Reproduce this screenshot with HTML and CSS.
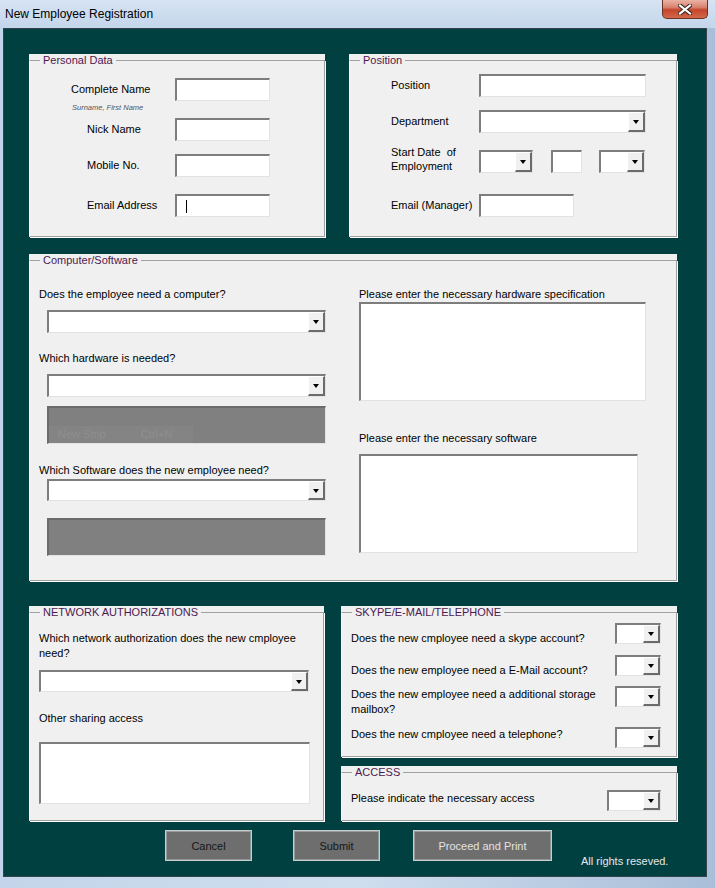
FILE: index.html
```html
<!DOCTYPE html>
<html>
<head>
<meta charset="utf-8">
<title>New Employee Registration</title>
<link rel="stylesheet" href="styles.css">
</head>
<body>
<div class="window">
  <div class="titlebar">
    <span class="title">New Employee Registration</span>
    <span class="close">
      <svg width="14" height="11" viewBox="0 0 14 11"><path d="M2 1.5 L12 9.5 M12 1.5 L2 9.5" stroke="#3a2420" stroke-width="4.2" stroke-linecap="square"/><path d="M2 1.5 L12 9.5 M12 1.5 L2 9.5" stroke="#fff" stroke-width="2.2" stroke-linecap="square"/></svg>
    </span>
  </div>
  <div class="client">
    <div class="row1">
      <div class="panel personal">
        <fieldset class="frame">
          <legend>Personal Data</legend>
          <div class="pd">
            <div class="pd-row"><span class="lbl wide">Complete Name</span><span class="tb w95"></span></div>
            <div class="note">Surname, First Name</div>
            <div class="pd-row"><span class="lbl">Nick Name</span><span class="tb w95"></span></div>
            <div class="pd-row gap13"><span class="lbl">Mobile No.</span><span class="tb w95"></span></div>
            <div class="pd-row gap17"><span class="lbl">Email Address</span><span class="tb w95"><span class="caret"></span></span></div>
          </div>
        </fieldset>
      </div>
      <div class="panel position">
        <fieldset class="frame">
          <legend>Position</legend>
          <div class="pos">
            <div class="pos-row"><span class="lbl">Position</span><span class="tb w167"></span></div>
            <div class="pos-row gap13"><span class="lbl">Department</span><span class="tb combo w167"><span class="dd"></span></span></div>
            <div class="pos-row gap17"><span class="lbl two">Start Date&nbsp; of<br>Employment</span><span class="tb combo w54 mr18"><span class="dd"></span></span><span class="tb w31 mr17"></span><span class="tb combo w46"><span class="dd"></span></span></div>
            <div class="pos-row gap21"><span class="lbl">Email (Manager)</span><span class="tb w95"></span></div>
          </div>
        </fieldset>
      </div>
    </div>

    <div class="panel computer">
      <fieldset class="frame">
        <legend>Computer/Software</legend>
        <div class="cs">
          <div class="cs-left">
            <div class="q mt21">Does the employee need a computer?</div>
            <div class="tb combo cbw mt9"><span class="dd"></span></div>
            <div class="q mt19">Which hardware is needed?</div>
            <div class="tb combo cbw mt9"><span class="dd"></span></div>
            <div class="graybox mt9"><div class="ghost"><span>New Strip</span><span>Ctrl+N</span></div></div>
            <div class="q mt20">Which Software does the new employee need?</div>
            <div class="tb combo cbw h22 mt2"><span class="dd"></span></div>
            <div class="graybox mt17"></div>
          </div>
          <div class="cs-right">
            <div class="q mt21">Please enter the necessary hardware specification</div>
            <div class="tb ta w287 mt1"></div>
            <div class="q mt31">Please enter the necessary software</div>
            <div class="tb ta w279 mt9"></div>
          </div>
        </div>
      </fieldset>
    </div>

    <div class="row3">
      <div class="panel network">
        <fieldset class="frame">
          <legend>NETWORK AUTHORIZATIONS</legend>
          <div class="net">
            <div class="q2 mt12">Which network authorization does the new cmployee<br>need?</div>
            <div class="tb combo w270 h22 mt9"><span class="dd"></span></div>
            <div class="q2 mt19">Other sharing access</div>
            <div class="tb w271 h62 mt16"></div>
          </div>
        </fieldset>
      </div>
      <div class="rightcol">
        <div class="panel skype">
          <fieldset class="frame">
            <legend>SKYPE/E-MAIL/TELEPHONE</legend>
            <div class="sk">
              <div class="sk-row h32"><span class="sq mt8">Does the new cmployee need a skype account?</span><span class="tb combo w46 h21"><span class="dd"></span></span></div>
              <div class="sk-row h31"><span class="sq mt8">Does the new employee need a E-Mail account?</span><span class="tb combo w46 h21"><span class="dd"></span></span></div>
              <div class="sk-row h41"><span class="sq mt1">Does the new employee need a additional storage<br>mailbox?</span><span class="tb combo w46 h21"><span class="dd"></span></span></div>
              <div class="sk-row"><span class="sq">Does the new cmployee need a telephone?</span><span class="tb combo w46 h21"><span class="dd"></span></span></div>
            </div>
          </fieldset>
        </div>
        <div class="panel access">
          <fieldset class="frame">
            <legend>ACCESS</legend>
            <div class="ac">
              <div class="sk-row"><span class="sq acq mt1">Please indicate the necessary access</span><span class="tb combo w54 h21"><span class="dd"></span></span></div>
            </div>
          </fieldset>
        </div>
      </div>
    </div>

    <div class="buttons">
      <span class="btn mr41">Cancel</span>
      <span class="btn mr33">Submit</span>
      <span class="btn wide-btn light mr29">Proceed and Print</span>
      <span class="rights">All rights reseved.</span>
    </div>
  </div>
</div>
</body>
</html>
```
FILE: styles.css
```css
* { box-sizing: border-box; }
html, body { margin: 0; padding: 0; }
body {
  width: 715px;
  height: 888px;
  overflow: hidden;
  font-family: "Liberation Sans", Arial, sans-serif;
  font-size: 11px;
  color: #000;
  background: #b9cce2;
}
.window {
  width: 715px;
  height: 888px;
  display: flex;
  flex-direction: column;
  background: linear-gradient(90deg, #c3d5ea 0%, #cfdeef 50%, #a9bed8 100%);
}
.titlebar {
  height: 28px;
  display: flex;
  align-items: flex-start;
  background: linear-gradient(#d6e4f3, #c4d6eb);
}
.title {
  font-size: 12px;
  line-height: 14px;
  margin: 7px 0 0 5px;
  color: #000;
}
.close {
  margin-left: auto;
  margin-right: 7px;
  width: 46px;
  height: 19px;
  border: 1px solid #6b3328;
  border-top: 0;
  border-radius: 0 0 5px 5px;
  background: linear-gradient(#eab3a5 0%, #d98471 40%, #c4452c 55%, #d2684a 100%);
  display: flex;
  align-items: center;
  justify-content: center;
}
.client {
  flex: 1;
  margin: 0 8px 11px 3px;
  border: 1px solid #34424c;
  background: #004040;
  padding: 25px 0 0 25px;
}

/* panels */
.row1 { display: flex; gap: 24px; }
.row3 { display: flex; gap: 17px; margin-top: 25px; }
.rightcol { display: flex; flex-direction: column; gap: 9px; }
.panel { background: #f0f0f0; }
.personal { width: 296px; height: 183px; }
.position { width: 328px; height: 183px; }
.computer { width: 648px; height: 327px; margin-top: 17px; }
.network { width: 295px; height: 215px; }
.skype { width: 336px; height: 151px; }
.access { width: 336px; height: 55px; }

.frame {
  margin: 0;
  padding: 0;
  min-width: 0;
  height: 100%;
  border: 1px solid #a0a0a0;
  border-left-color: #fdfdfd;
  box-shadow: 1px 1px 0 #fff;
}
.frame legend {
  margin-left: 10px;
  padding: 0 3px;
  font-size: 11px;
  line-height: 13px;
  color: #4e1850;
}

/* common fields */
.tb {
  display: flex;
  align-items: center;
  height: 23px;
  background: #fff;
  border-style: solid;
  border-width: 2px 1px 1px 2px;
  border-color: #7d7d7d #e3e3e3 #e3e3e3 #7d7d7d;
  flex: none;
}
.combo { justify-content: flex-end; }
.dd {
  width: 17px;
  height: 100%;
  background: #f0f0f0;
  border-style: solid;
  border-width: 1px 2px 2px 1px;
  border-color: #fff #6b6b6b #6b6b6b #fff;
  display: flex;
  align-items: center;
  justify-content: center;
  padding-top: 1px;
}
.dd::before {
  content: "";
  border-left: 3.5px solid transparent;
  border-right: 3.5px solid transparent;
  border-top: 4px solid #000;
}
.caret { width: 1px; height: 13px; background: #000; margin-left: 9px; }

.w31 { width: 31px; }
.w46 { width: 46px; }
.w54 { width: 54px; }
.w95 { width: 95px; }
.w167 { width: 167px; }
.w270 { width: 270px; }
.w271 { width: 271px; }
.w279 { width: 279px; }
.w287 { width: 287px; }
.h21 { height: 21px; }
.h22 { height: 22px; }
.h62 { height: 62px; }
.mr17 { margin-right: 17px; }
.mr18 { margin-right: 18px; }
.mt1 { margin-top: 1px; }
.mt2 { margin-top: 2px; }
.mt8 { margin-top: 8px; }
.mt9 { margin-top: 9px; }
.mt12 { margin-top: 12px; }
.mt16 { margin-top: 16px; }
.mt17 { margin-top: 17px; }
.mt19 { margin-top: 19px; }
.mt20 { margin-top: 20px; }
.mt21 { margin-top: 21px; }
.mt31 { margin-top: 31px; }
.gap13 { margin-top: 13px; }
.gap17 { margin-top: 17px; }
.gap21 { margin-top: 21px; }

/* personal data */
.pd { padding-top: 11px; }
.pd-row { display: flex; align-items: center; height: 23px; }
.pd-row .lbl { width: 145px; padding-left: 57px; line-height: 13px; }
.pd-row .lbl.wide { padding-left: 41px; }
.note {
  height: 17px;
  line-height: 14px;
  padding-left: 42px;
  font-size: 7.5px;
  font-style: italic;
  color: #555;
}

/* position */
.pos { padding-top: 7px; }
.pos-row { display: flex; align-items: center; height: 23px; }
.pos-row .lbl { width: 129px; padding-left: 41px; line-height: 13px; flex: none; }
.pos-row .lbl.two { line-height: 14px; margin-bottom: 5px; }

/* computer / software */
.cs { display: flex; }
.cs-left { width: 329px; padding-left: 9px; display: flex; flex-direction: column; }
.cs-right { display: flex; flex-direction: column; }
.q { line-height: 13px; white-space: nowrap; }
.cbw { width: 279px; margin-left: 8px; }
.cs-left .combo.mt9, .cs-left .combo.mt2 { }
.graybox {
  width: 279px;
  height: 38px;
  margin-left: 8px;
  background: #808080;
  border-style: solid;
  border-width: 2px 1px 1px 2px;
  border-color: #6c6c6c #e3e3e3 #e3e3e3 #6c6c6c;
  display: flex;
  flex-direction: column;
}
.ghost {
  margin-top: auto;
  width: 144px;
  height: 17px;
  background: #848484;
  color: #8f8f8f;
  display: flex;
  gap: 35px;
  padding-left: 9px;
  line-height: 17px;
}
.ta { height: 99px; }

/* network */
.net { padding-left: 9px; display: flex; flex-direction: column; }
.q2 { line-height: 15px; }

/* skype / access */
.sk { padding-top: 4px; }
.ac { padding-top: 11px; }
.sk-row { display: flex; align-items: flex-start; }
.sk-row.h32 { height: 32px; }
.sk-row.h31 { height: 31px; }
.sk-row.h41 { height: 41px; }
.sq { width: 273px; padding-left: 9px; line-height: 15px; flex: none; }
.sq.acq { width: 265px; }

/* buttons */
.buttons { display: flex; margin: 9px 0 0 136px; }
.btn {
  width: 87px;
  height: 31px;
  background: #6e6e6e;
  border: 1px solid #c9cdcd;
  box-shadow: inset -1px -1px 0 #8f9494, inset 1px 1px 0 #9a9a9a;
  display: flex;
  align-items: center;
  justify-content: center;
  color: #161616;
  flex: none;
}
.btn.wide-btn { width: 139px; }
.btn.light { color: #e2e2e2; }
.mr41 { margin-right: 41px; }
.mr33 { margin-right: 33px; }
.mr29 { margin-right: 29px; }
.rights { margin-top: 25px; line-height: 13px; color: #e8e8e8; }
```
